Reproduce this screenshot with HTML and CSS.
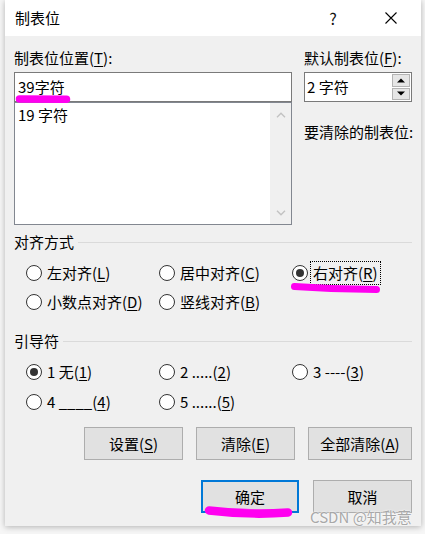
FILE: index.html
```html
<!DOCTYPE html>
<html lang="zh-CN">
<head>
<meta charset="utf-8">
<title>制表位</title>
<link rel="stylesheet" href="styles.css">
</head>
<body>
<div class="window">
  <div class="titlebar">
    <div class="title">制表位</div>
    <div class="tb-help">?</div>
    <div class="tb-close">
      <svg width="12" height="12" viewBox="0 0 12 12"><path d="M0.5 0.5L11.5 11.5M11.5 0.5L0.5 11.5" stroke="#000" stroke-width="1.1" fill="none"/></svg>
    </div>
  </div>
  <div class="content">
    <div class="top">
      <div class="left-col">
        <div class="label">制表位位置(<u>T</u>):</div>
        <div class="field">39字符</div>
        <div class="list">
          <div class="list-items">19 字符</div>
          <div class="scrollbar">
            <svg width="10" height="6" viewBox="0 0 10 6"><path d="M1 5.3L5 1.3L9 5.3" stroke="#c2c2c2" stroke-width="1.4" fill="none"/></svg>
            <svg width="10" height="6" viewBox="0 0 10 6"><path d="M1 0.7L5 4.7L9 0.7" stroke="#c2c2c2" stroke-width="1.4" fill="none"/></svg>
          </div>
        </div>
      </div>
      <div class="right-col">
        <div class="label">默认制表位(<u>F</u>):</div>
        <div class="spin">
          <div class="spin-value">2 字符</div>
          <div class="spin-btns">
            <div class="spin-btn"><svg width="8" height="5" viewBox="0 0 8 5"><path d="M0 4.5L4 0.5L8 4.5Z" fill="#000"/></svg></div>
            <div class="spin-btn"><svg width="8" height="5" viewBox="0 0 8 5"><path d="M0 0.5L4 4.5L8 0.5Z" fill="#000"/></svg></div>
          </div>
        </div>
        <div class="clear-label">要清除的制表位:</div>
      </div>
    </div>

    <div class="group-head first"><span>对齐方式</span><span class="line"></span></div>
    <div class="radios align">
      <div class="opt"><span class="radio"></span><span class="opt-text">左对齐(<u>L</u>)</span></div>
      <div class="opt"><span class="radio"></span><span class="opt-text">居中对齐(<u>C</u>)</span></div>
      <div class="opt"><span class="radio checked"></span><span class="opt-text focus">右对齐(<u>R</u>)</span></div>
      <div class="opt"><span class="radio"></span><span class="opt-text">小数点对齐(<u>D</u>)</span></div>
      <div class="opt"><span class="radio"></span><span class="opt-text">竖线对齐(<u>B</u>)</span></div>
    </div>

    <div class="group-head second"><span>引导符</span><span class="line"></span></div>
    <div class="radios leader">
      <div class="opt"><span class="radio checked"></span><span class="opt-text">1 无(<u>1</u>)</span></div>
      <div class="opt"><span class="radio"></span><span class="opt-text">2 .....(<u>2</u>)</span></div>
      <div class="opt"><span class="radio"></span><span class="opt-text">3 ----(<u>3</u>)</span></div>
      <div class="opt"><span class="radio"></span><span class="opt-text">4 ____(<u>4</u>)</span></div>
      <div class="opt"><span class="radio"></span><span class="opt-text">5 ......(<u>5</u>)</span></div>
    </div>

    <div class="btn-row">
      <div class="btn w99">设置(<u>S</u>)</div>
      <div class="btn w99">清除(<u>E</u>)</div>
      <div class="btn w104">全部清除(<u>A</u>)</div>
    </div>
    <div class="btn-row ok-row">
      <div class="btn w98 default">确定</div>
      <div class="btn w99">取消</div>
    </div>
  </div>
</div>
<div class="watermark">CSDN @知我意</div>
<svg class="marks" width="425" height="534" viewBox="0 0 425 534">
  <path d="M19.5 99 L66.5 99.3" stroke="#ff00f0" stroke-width="7.5" stroke-linecap="round" fill="none"/>
  <path d="M294.5 286.5 Q 335 289.5 376.5 289.5" stroke="#ff00f0" stroke-width="7" stroke-linecap="round" fill="none"/>
  <path d="M209 510.5 Q 250 515.5 288 512.5" stroke="#ff00f0" stroke-width="8.5" stroke-linecap="round" fill="none"/>
</svg>
</body>
</html>
```
FILE: styles.css
```css
* { box-sizing: border-box; }
html, body { margin: 0; padding: 0; }
body {
  width: 425px;
  height: 534px;
  background: #f6f6f6;
  position: relative;
  overflow: hidden;
  font-family: "Noto Sans CJK SC", "Noto Sans", sans-serif;
  font-size: 15px;
  color: #000;
}
u { text-decoration: underline; text-underline-offset: 2px; text-decoration-thickness: 1px; }

.window {
  margin-left: 5px;
  width: 416px;
  height: 526px;
  background: #f0f0f0;
  box-shadow: 0 1px 6px rgba(0, 0, 0, 0.28);
  display: flex;
  flex-direction: column;
}
.titlebar {
  flex: none;
  height: 36px;
  background: #fff;
  display: flex;
  align-items: center;
  padding-left: 10px;
}
.title { flex: 1; line-height: 20px; }
.tb-help { width: 40px; text-align: center; font-size: 16px; line-height: 20px; color: #111; }
.tb-close {
  width: 40px;
  margin-left: 18px;
  margin-right: 10px;
  display: flex;
  justify-content: center;
}

.content {
  flex: 1;
  display: flex;
  flex-direction: column;
  padding: 12px 9px 0 9px;
}
.top { display: flex; gap: 12px; }
.left-col { width: 278px; }
.right-col { width: 108px; }
.label { height: 20px; line-height: 20px; white-space: nowrap; }

.field {
  margin-top: 4px;
  height: 30px;
  background: #fff;
  border: 1px solid #7a7a7a;
  padding-left: 3px;
  line-height: 28px;
}
.list {
  height: 123px;
  background: #fff;
  border: 1px solid #828790;
  display: flex;
}
.list-items { flex: 1; padding: 1px 3px; line-height: 22px; }
.scrollbar {
  width: 21px;
  background: #f0f0f0;
  display: flex;
  flex-direction: column;
  justify-content: space-between;
  align-items: center;
  padding: 9px 0 8px 0;
}

.spin {
  margin-top: 4px;
  height: 30px;
  display: flex;
  background: #fff;
  border: 1px solid #7a7a7a;
}
.spin-value { flex: 1; padding-left: 2px; line-height: 28px; }
.spin-btns {
  width: 19px;
  display: flex;
  flex-direction: column;
  gap: 1px;
  padding: 1px 1px 1px 0;
}
.spin-btn {
  flex: 1;
  background: #e6e6e6;
  border: 1px solid #b4b4b4;
  display: flex;
  align-items: center;
  justify-content: center;
}
.clear-label { margin-top: 20px; line-height: 20px; white-space: nowrap; }

.group-head { display: flex; align-items: center; line-height: 20px; height: 20px; }
.group-head.first { margin-top: 7px; }
.group-head.second { margin-top: 15px; }
.group-head .line { flex: 1; height: 1px; background: #dadada; margin-left: 4px; }

.radios {
  display: grid;
  grid-template-columns: 133px 133px 1fr;
  padding-left: 12px;
  padding-top: 6px;
}
.radios.align { grid-auto-rows: 29px; }
.radios.leader { grid-auto-rows: 30px; }
.opt { display: flex; align-items: center; white-space: nowrap; }
.radio {
  flex: none;
  width: 16px;
  height: 16px;
  border: 1px solid #333;
  border-radius: 50%;
  background: #fff;
  margin-right: 5px;
  display: flex;
  align-items: center;
  justify-content: center;
}
.radio.checked::after {
  content: "";
  width: 8px;
  height: 8px;
  border-radius: 50%;
  background: #333;
}
.opt-text { line-height: 20px; }
.opt-text.focus {
  outline: 1px dotted #000;
  padding: 1px 2px;
  margin-left: -2px;
}

.btn-row { display: flex; justify-content: flex-end; gap: 13px; margin-top: 10px; }
.ok-row { margin-top: 20px; gap: 14px; }
.btn {
  height: 33px;
  border: 1px solid #adadad;
  background: #e1e1e1;
  display: flex;
  align-items: center;
  justify-content: center;
  line-height: 20px;
  white-space: nowrap;
}
.btn.default { border: 2px solid #0078d7; }
.w98 { width: 98px; }
.w99 { width: 99px; }
.w104 { width: 104px; }

.watermark {
  position: absolute;
  left: 310px;
  top: 507px;
  font-size: 15px;
  line-height: 20px;
  color: #a8a8a8;
  text-shadow: 0 0 2px #fff, 0 0 1px #fff;
  white-space: nowrap;
}
.marks { position: absolute; left: 0; top: 0; pointer-events: none; }
```
